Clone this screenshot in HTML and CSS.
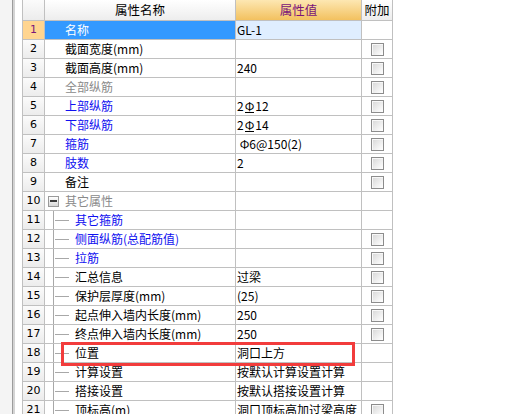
FILE: index.html
```html
<!DOCTYPE html>
<html lang="zh">
<head>
<meta charset="utf-8">
<title>属性编辑</title>
<link rel="stylesheet" href="styles.css">
</head>
<body>
<div class="page">
  <div class="side"><div class="side-a"></div><div class="side-b"></div><div class="side-c"></div></div>
  <div class="grid">
    <div class="hd num"></div>
    <div class="hd name-h">属性名称</div>
    <div class="hd val-h">属性值</div>
    <div class="hd att-h">附加</div>

    <div class="num sel-num">1</div><div class="name sel-name">名称</div><div class="val sel-val">GL-1</div><div class="att"></div>
    <div class="num">2</div><div class="name">截面宽度(mm)</div><div class="val"></div><div class="att"><span class="cb"></span></div>
    <div class="num">3</div><div class="name">截面高度(mm)</div><div class="val">240</div><div class="att"><span class="cb"></span></div>
    <div class="num">4</div><div class="name gray">全部纵筋</div><div class="val"></div><div class="att"><span class="cb"></span></div>
    <div class="num">5</div><div class="name blue">上部纵筋</div><div class="val">2<span class="bar">Φ</span>12</div><div class="att"><span class="cb"></span></div>
    <div class="num">6</div><div class="name blue">下部纵筋</div><div class="val">2<span class="bar">Φ</span>14</div><div class="att"><span class="cb"></span></div>
    <div class="num">7</div><div class="name blue">箍筋</div><div class="val">&nbsp;Φ6@150(2)</div><div class="att"><span class="cb"></span></div>
    <div class="num">8</div><div class="name blue">肢数</div><div class="val">2</div><div class="att"><span class="cb"></span></div>
    <div class="num">9</div><div class="name">备注</div><div class="val"></div><div class="att"><span class="cb"></span></div>
    <div class="num">10</div><div class="name gray group"><span class="minus"></span>其它属性</div><div class="val"></div><div class="att"></div>
    <div class="num">11</div><div class="name blue tree">其它箍筋</div><div class="val"></div><div class="att"></div>
    <div class="num">12</div><div class="name blue tree">侧面纵筋(总配筋值)</div><div class="val"></div><div class="att"><span class="cb"></span></div>
    <div class="num">13</div><div class="name blue tree">拉筋</div><div class="val"></div><div class="att"><span class="cb"></span></div>
    <div class="num">14</div><div class="name tree">汇总信息</div><div class="val">过梁</div><div class="att"><span class="cb"></span></div>
    <div class="num">15</div><div class="name tree">保护层厚度(mm)</div><div class="val">(25)</div><div class="att"><span class="cb"></span></div>
    <div class="num">16</div><div class="name tree">起点伸入墙内长度(mm)</div><div class="val">250</div><div class="att"><span class="cb"></span></div>
    <div class="num">17</div><div class="name tree">终点伸入墙内长度(mm)</div><div class="val">250</div><div class="att"><span class="cb"></span></div>
    <div class="num">18</div><div class="name tree">位置</div><div class="val">洞口上方</div><div class="att"></div>
    <div class="num">19</div><div class="name tree">计算设置</div><div class="val">按默认计算设置计算</div><div class="att"></div>
    <div class="num">20</div><div class="name tree">搭接设置</div><div class="val">按默认搭接设置计算</div><div class="att"></div>
    <div class="num">21</div><div class="name tree">顶标高(m)</div><div class="val">洞口顶标高加过梁高度</div><div class="att"><span class="cb"></span></div>
  </div>
  <div class="mark"></div>
</div>
</body>
</html>
```
FILE: styles.css
```css
html, body {
  margin: 0;
  padding: 0;
  background: #ffffff;
  overflow: hidden;
}
.page {
  position: relative;
  display: flex;
  width: 513px;
  height: 414px;
  overflow: hidden;
  font-family: "Noto Sans CJK SC", "DejaVu Sans", sans-serif;
  font-size: 12px;
  color: #000;
}
.side {
  display: flex;
  width: 22px;
  flex: none;
}
.side-a { width: 12px; background: #f4f4f4; }
.side-b { width: 1px; background: #9c9c9c; border-right: 2px solid #d4d4d4; }
.side-c { flex: 1; background: #fff; }

.grid {
  display: grid;
  grid-template-columns: 21px 190px 125px 30px;
  grid-template-rows: 20px;
  grid-auto-rows: 18px;
  gap: 1px;
  background: #c0c0c0;
  border-left: 1px solid #c0c0c0;
  border-right: 1px solid #c0c0c0;
  align-self: flex-start;
}
.grid > div {
  background: #fff;
  line-height: 18px;
  white-space: nowrap;
  overflow: hidden;
}
.hd {
  line-height: 20px !important;
  text-align: center;
  font-size: 12.5px;
  background: linear-gradient(#ffffff, #ededed) !important;
}
.val-h {
  background: linear-gradient(#fde7b2, #f3c15f) !important;
  color: #7a157a;
}
.num {
  text-align: center;
  font-family: "DejaVu Sans", sans-serif;
  font-size: 11px;
  background: linear-gradient(#fbfbfb, #ececec) !important;
}
.sel-num {
  background: #ffd590 !important;
  color: #7a157a;
}
.name {
  padding-left: 20px;
}
.sel-name {
  background: #3399ff !important;
  color: #fff;
}
.sel-val {
  background: #dfeeff !important;
}
.blue { color: #1010f0; }
.gray { color: #8a8a8a; }
.group {
  display: flex;
  align-items: center;
  padding-left: 3px;
}
.minus {
  width: 9px;
  height: 9px;
  border: 1px solid #9a9a9a;
  margin-right: 6px;
  background: linear-gradient(#3c3c3c, #3c3c3c) center / 7px 2px no-repeat,
              linear-gradient(#ffffff, #d8d8d8);
}
.tree {
  padding-left: 30px;
  background:
    linear-gradient(#a8a8a8, #a8a8a8) 8px 0 / 1px 100% no-repeat,
    linear-gradient(#a8a8a8, #a8a8a8) 10px 50% / 14px 1px no-repeat,
    #fff !important;
}
.val {
  padding-left: 1px;
}
.bar {
  display: inline-block;
  line-height: 12px;
  border-bottom: 1px solid #000;
  margin: 0 1px;
}
.att {
  display: flex;
  align-items: center;
  justify-content: center;
}
.cb {
  width: 11px;
  height: 11px;
  border: 1px solid #8c8c8c;
  background: linear-gradient(135deg, #d6d6d6, #f4f4f4 70%, #ffffff);
  box-shadow: inset 1px 1px 0 #f8f8f8;
}
.mark {
  position: absolute;
  left: 61px;
  top: 342px;
  width: 288px;
  height: 18px;
  border: 3px solid #f23c3c;
}
```
